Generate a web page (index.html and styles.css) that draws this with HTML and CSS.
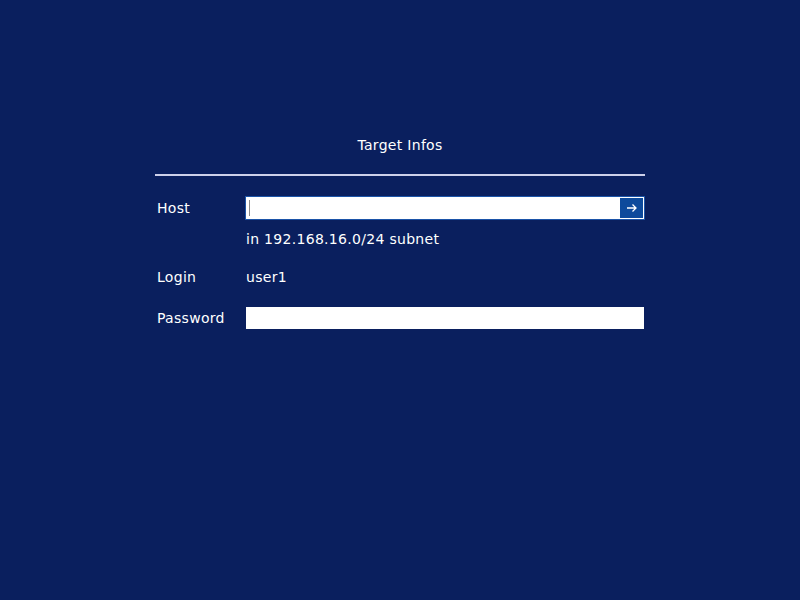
FILE: index.html
```html
<!DOCTYPE html>
<html>
<head>
<meta charset="utf-8">
<link rel="stylesheet" href="styles.css">
</head>
<body>
<div class="panel">
  <div class="title">Target Infos</div>
  <div class="rule"></div>
  <div class="form">
    <div class="label row-host">Host</div>
    <div class="host-field">
      <span class="caret"></span>
      <span class="go"><svg width="12" height="10" viewBox="0 0 12 10"><path d="M1 5H10M6.5 1.5L10 5L6.5 8.5" fill="none" stroke="#fff" stroke-width="1.3"/></svg></span>
    </div>
    <div class="label"></div>
    <div class="hint">in 192.168.16.0/24 subnet</div>
    <div class="label row-login">Login</div>
    <div class="value row-login">user1</div>
    <div class="label row-pass">Password</div>
    <div class="pass-field"></div>
  </div>
</div>
</body>
</html>
```
FILE: styles.css
```css
html, body {
  margin: 0;
  padding: 0;
  background: #0a1f5e;
  width: 800px;
  height: 600px;
  overflow: hidden;
}
body {
  font-family: "DejaVu Sans", sans-serif;
  font-size: 14px;
  letter-spacing: 0.3px;
  color: #ffffff;
}
.panel {
  margin-left: 155px;
  width: 490px;
  padding-top: 136px;
}
.title {
  text-align: center;
  line-height: 18px;
  height: 18px;
}
.rule {
  margin-top: 20px;
  height: 2px;
  background: #cdd0ea;
}
.form {
  display: grid;
  grid-template-columns: 90px 400px;
  align-items: center;
  margin-top: 20px;
}
.label {
  padding-left: 2px;
  line-height: 18px;
}
.host-field {
  height: 22px;
  background: #fff;
  border: 1px solid #1b54a8;
  display: flex;
  align-items: center;
  justify-content: space-between;
  box-sizing: content-box;
  width: 398px;
}
.caret {
  width: 1px;
  height: 16px;
  background: #8a8a8a;
  margin-left: 3px;
}
.go {
  width: 23px;
  height: 20px;
  margin-right: 1px;
  background: #0d4a9c;
  display: flex;
  align-items: center;
  justify-content: center;
}
.hint {
  margin-top: 10px;
  line-height: 18px;
  padding-left: 1px;
}
.row-login {
  margin-top: 20px;
  line-height: 18px;
}
.value {
  line-height: 18px;
  padding-left: 1px;
}
.row-pass {
  margin-top: 21px;
}
.pass-field {
  margin-top: 21px;
  margin-left: 1px;
  height: 22px;
  background: #fff;
  width: 398px;
}
```
